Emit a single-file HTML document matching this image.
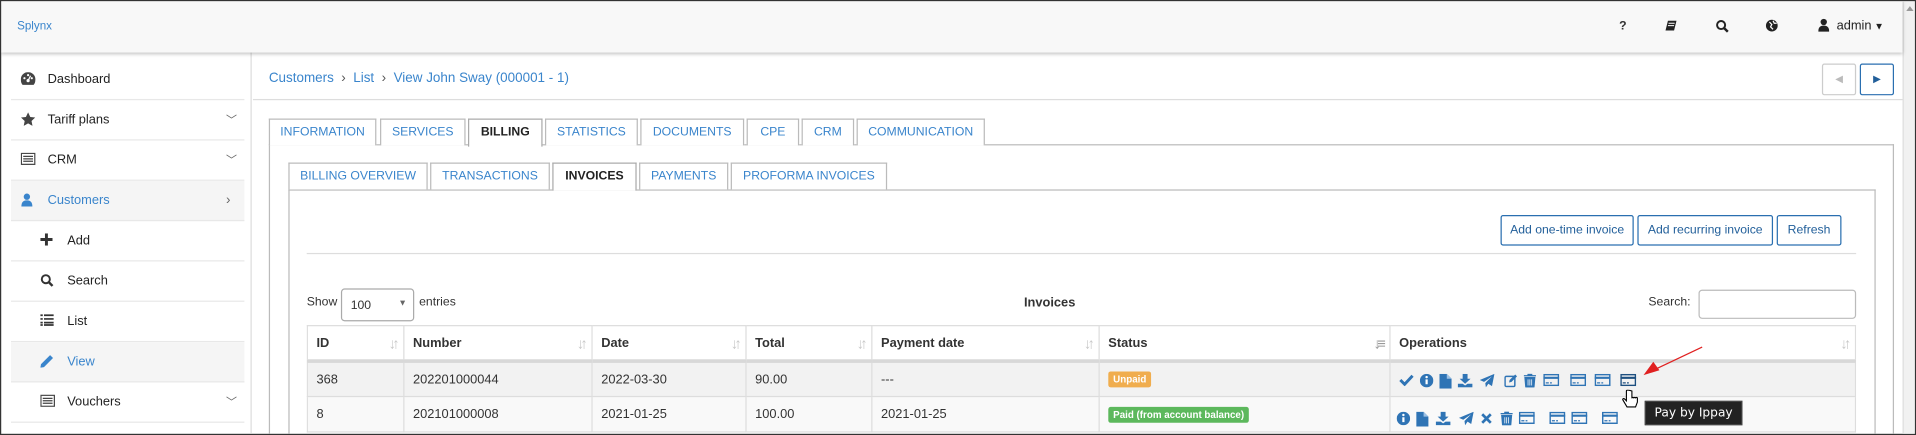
<!DOCTYPE html>
<html><head><meta charset="utf-8"><style>
*{box-sizing:border-box;margin:0;padding:0}
html,body{width:1916px;height:435px;overflow:hidden;background:#fff;font-family:"Liberation Sans",sans-serif}
#st{position:absolute;left:0;top:0;width:1568px;height:356px;transform:scale(1.22194);transform-origin:0 0;font-size:11px;color:#333;border:1px solid #333;overflow:hidden}
.a{position:absolute;white-space:nowrap}
.hdr{left:0;top:0;width:1556px;height:42px;background:#f8f8f8;box-shadow:0 1px 3px rgba(0,0,0,.25);z-index:2}
.sb{left:1556px;top:0;width:12px;height:355px;background:#f1f1f1;border-left:1px solid #ddd}
.side{left:0;top:42px;width:205px;height:313px;border-right:1px solid #ddd}
.it{position:absolute;left:8px;width:191px;height:33px;border-bottom:1px solid #e8e8e8;line-height:32px;font-size:10.5px;color:#222}
.it.on{background:#f5f5f5;color:#3a85cc}
.it .t{position:absolute;left:30px}
.it.sub .t{position:absolute;left:46px}
.it .ic{position:absolute;left:8px;top:10px}
.it.sub .ic{left:24px}
.chev{position:absolute;left:176px;top:0;color:#666;font-size:9px}
.blue{color:#3a85cc}
.tab{position:absolute;height:22px;border:1px solid #bbb;border-bottom:none;background:#fff;text-align:center;line-height:21px;font-size:10px;color:#3a85cc}
.tab.on{color:#222;font-weight:bold;height:23px;border-color:#aaa}
.btn{position:absolute;top:175px;height:25px;border:1px solid #2a6fb0;border-radius:2px;font-size:10px;line-height:23px;text-align:center;color:#225f9a}
th,td{border:1px solid #ddd;text-align:left;padding:0 7px;font-size:10.5px}
th{height:29px;font-weight:bold;border-bottom:3px solid #d8d8d8;position:relative}
td{height:29px}
.so{position:absolute;right:6px;top:7px;color:#c8c8c8;font-size:12px;font-weight:bold;letter-spacing:-3px}
.bdg{display:inline-block;color:#fff;font-size:8px;font-weight:bold;padding:2px 4px;border-radius:2px}
</style></head><body><div id="st">
<div class="a hdr">
 <div class="a blue" style="left:13px;top:15px;font-size:9.5px">Splynx</div>
 <div class="a" style="left:1324px;top:15px;font-size:10px;font-weight:bold">?</div>
 <svg class="a" style="left:1362px;top:15px" width="10" height="10" viewBox="0 0 10 10"><path d="M2 1h7l-2 8H0z" fill="#222"/><path d="M2.5 3h5M2 5h5" stroke="#fff" stroke-width=".8"/></svg>
 <svg class="a" style="left:1403px;top:15px" width="11" height="11" viewBox="0 0 11 11"><circle cx="4.5" cy="4.5" r="3.3" fill="none" stroke="#222" stroke-width="1.6"/><path d="M7 7l3 3" stroke="#222" stroke-width="2"/></svg>
 <svg class="a" style="left:1444px;top:15px" width="10" height="10" viewBox="0 0 10 10"><circle cx="5" cy="5" r="4.8" fill="#222"/><path d="M3 2l2 2-1 2 2 2M6 1l1 2 2 0" stroke="#fff" stroke-width="1" fill="none"/></svg>
 <svg class="a" style="left:1487px;top:14px" width="9" height="11" viewBox="0 0 9 11"><circle cx="4.5" cy="3" r="2.6" fill="#222"/><path d="M0 11c0-4 2-5 4.5-5S9 7 9 11z" fill="#222"/></svg>
 <div class="a" style="left:1502px;top:14px;font-size:10.5px;color:#222">admin<span style="font-size:8px"> ▼</span></div>
</div>
<div class="a sb"><div style="position:absolute;left:2px;top:4px;border:3px solid transparent;border-bottom:4px solid #999;border-top:0"></div></div>
<div class="a side">
 <div class="it" style="top:6px"><svg class="ic" width="12" height="11" viewBox="0 0 12 11"><path d="M6 0a6 6 0 0 0-6 6c0 2 .6 3.5 1.5 4.5h9C11.4 9.5 12 8 12 6A6 6 0 0 0 6 0z" fill="#444"/><circle cx="6" cy="7" r="1.3" fill="#fff"/><path d="M6 7l2-4" stroke="#fff"/><circle cx="3" cy="5" r=".9" fill="#fff"/><circle cx="9" cy="5" r=".9" fill="#fff"/><circle cx="6" cy="2.5" r=".9" fill="#fff"/></svg><span class="t">Dashboard</span></div>
 <div class="it" style="top:39px"><svg class="ic" width="12" height="11" viewBox="0 0 12 11"><path d="M6 0l1.8 3.7 4 .5-3 2.8.8 4L6 9 2.4 11l.8-4-3-2.8 4-.5z" fill="#444"/></svg><span class="t">Tariff plans</span><span class="chev">﹀</span></div>
 <div class="it" style="top:72px"><svg class="ic" width="12" height="10" viewBox="0 0 12 10"><rect x=".5" y=".5" width="11" height="9" fill="none" stroke="#444"/><path d="M2 3h8M2 5h8M2 7h8" stroke="#444"/></svg><span class="t">CRM</span><span class="chev">﹀</span></div>
 <div class="it on" style="top:105px"><svg class="ic" width="10" height="11" viewBox="0 0 9 11"><circle cx="4.5" cy="3" r="2.6" fill="#3a85cc"/><path d="M0 11c0-4 2-5 4.5-5S9 7 9 11z" fill="#3a85cc"/></svg><span class="t">Customers</span><span class="chev" style="font-size:11px">›</span></div>
 <div class="it sub" style="top:138px"><svg class="ic" width="10" height="10" viewBox="0 0 10 10"><path d="M5 0v10M0 5h10" stroke="#333" stroke-width="2.4"/></svg><span class="t">Add</span></div>
 <div class="it sub" style="top:171px"><svg class="ic" width="11" height="11" viewBox="0 0 11 11"><circle cx="4.5" cy="4.5" r="3.3" fill="none" stroke="#333" stroke-width="1.6"/><path d="M7 7l3 3" stroke="#333" stroke-width="2"/></svg><span class="t">Search</span></div>
 <div class="it sub" style="top:204px"><svg class="ic" width="11" height="10" viewBox="0 0 11 10"><path d="M0 1h2M0 4h2M0 7h2M3 1h8M3 4h8M3 7h8M0 9h2M3 9h8" stroke="#333" stroke-width="1.4"/></svg><span class="t">List</span></div>
 <div class="it sub on" style="top:237px"><svg class="ic" width="11" height="11" viewBox="0 0 11 11"><path d="M0 11l.6-3L8 .6l2.4 2.4L3 10.4z" fill="#3a85cc"/></svg><span class="t">View</span></div>
 <div class="it sub" style="top:270px"><svg class="ic" width="12" height="10" viewBox="0 0 12 10"><rect x=".5" y=".5" width="11" height="9" fill="none" stroke="#444"/><path d="M2 3h8M2 5h8M2 7h8" stroke="#444"/></svg><span class="t">Vouchers</span><span class="chev">﹀</span></div>
</div>
<div class="a blue" style="left:219px;top:57px;font-size:11px">Customers&nbsp; <span style="color:#555">›</span>&nbsp; List&nbsp; <span style="color:#555">›</span>&nbsp; View John Sway (000001 - 1)</div>
<div class="a" style="left:206px;top:80px;width:1350px;height:1px;background:#ddd"></div>
<div class="a" style="left:1490px;top:51px;width:28px;height:26px;border:1px solid #ccc;border-radius:2px;color:#bbb;text-align:center;line-height:24px;font-size:8px">◀</div>
<div class="a" style="left:1521px;top:51px;width:28px;height:26px;border:1px solid #2a6fb0;border-radius:2px;color:#225f9a;text-align:center;line-height:24px;font-size:8px">▶</div>
<div class="a" style="left:219px;top:117px;width:1330px;height:237px;border:1px solid #bbb;border-bottom:none"></div>
<div class="tab" style="left:219px;top:96px;width:88px">INFORMATION</div>
<div class="tab" style="left:310px;top:96px;width:70px">SERVICES</div>
<div class="tab on" style="left:382px;top:96px;width:61px">BILLING</div>
<div class="tab" style="left:445px;top:96px;width:76px">STATISTICS</div>
<div class="tab" style="left:523px;top:96px;width:85px">DOCUMENTS</div>
<div class="tab" style="left:610px;top:96px;width:43px">CPE</div>
<div class="tab" style="left:655px;top:96px;width:43px">CRM</div>
<div class="tab" style="left:700px;top:96px;width:105px">COMMUNICATION</div>
<div class="a" style="left:235px;top:154px;width:1299px;height:200px;border:1px solid #bbb;border-bottom:none"></div>
<div class="tab" style="left:235px;top:132px;width:114px">BILLING OVERVIEW</div>
<div class="tab" style="left:351px;top:132px;width:98px">TRANSACTIONS</div>
<div class="tab on" style="left:451px;top:132px;width:69px">INVOICES</div>
<div class="tab" style="left:522px;top:132px;width:73px">PAYMENTS</div>
<div class="tab" style="left:597px;top:132px;width:128px">PROFORMA INVOICES</div>
<div class="btn" style="left:1227px;width:109px">Add one-time invoice</div>
<div class="btn" style="left:1339px;width:111px">Add recurring invoice</div>
<div class="btn" style="left:1453px;width:53px">Refresh</div>
<div class="a" style="left:250px;top:206px;width:1268px;height:1px;background:#ddd"></div>
<div class="a" style="left:250px;top:241px;font-size:10px">Show</div>
<div class="a" style="left:278px;top:235px;width:60px;height:27px;border:1px solid #aaa;border-radius:3px;font-size:10px;padding:8px 0 0 7px">100<span style="position:absolute;right:5px;top:8px;font-size:7px;color:#666">▼</span></div>
<div class="a" style="left:342px;top:241px;font-size:10px">entries</div>
<div class="a" style="left:837px;top:241px;font-size:10.5px;font-weight:bold">Invoices</div>
<div class="a" style="left:1348px;top:241px;font-size:10px">Search:</div>
<div class="a" style="left:1389px;top:236px;width:129px;height:24px;border:1px solid #bbb;border-radius:3px"></div>
<div class="a" style="left:250px;top:265px;width:1268px;height:90px;overflow:hidden">
<table style="width:1268px;border-collapse:collapse;background:#fff">
<tr><th style="width:79px">ID<span class="so">↓↑</span></th><th style="width:154px">Number<span class="so">↓↑</span></th><th style="width:126px">Date<span class="so">↓↑</span></th><th style="width:103px">Total<span class="so">↓↑</span></th><th style="width:186px">Payment date<span class="so">↓↑</span></th><th style="width:238px">Status<span class="so" style="color:#999">↓≡</span></th><th>Operations<span class="so">↓↑</span></th></tr>
<tr style="background:#f2f2f2"><td>368</td><td>202201000044</td><td>2022-03-30</td><td>90.00</td><td>---</td><td><span class="bdg" style="background:#f0ad4e">Unpaid</span></td><td></td></tr>
<tr style="background:#f9f9f9"><td>8</td><td>202101000008</td><td>2021-01-25</td><td>100.00</td><td>2021-01-25</td><td><span class="bdg" style="background:#5cb85c">Paid (from account balance)</span></td><td></td></tr>
</table></div>
<div class="a" style="left:1144px;top:305px;height:12px">
<svg class="a" style="left:0" width="12" height="10" viewBox="0 0 12 10"><path d="M1 5l3.5 3.5L11 1.5" stroke="#2f74b5" stroke-width="2.4" fill="none"/></svg>
<svg class="a" style="left:17px" width="11" height="11" viewBox="0 0 11 11"><circle cx="5.5" cy="5.5" r="5.5" fill="#2f74b5"/><path d="M5.5 4.5v4" stroke="#fff" stroke-width="1.8"/><circle cx="5.5" cy="2.6" r="1" fill="#fff"/></svg>
<svg class="a" style="left:33px" width="10" height="12" viewBox="0 0 10 12"><path d="M0 0h6l4 4v8H0z" fill="#2f74b5"/><path d="M6 0v4h4" fill="#9cc0e4"/></svg>
<svg class="a" style="left:48px" width="12" height="11" viewBox="0 0 12 11"><path d="M4 0h4v4h2.5L6 8 1.5 4H4z" fill="#2f74b5"/><path d="M0 8h4l2 1.5L8 8h4v3H0z" fill="#2f74b5"/></svg>
<svg class="a" style="left:66px" width="12" height="11" viewBox="0 0 12 11"><path d="M12 0L0 5l3.5 1.5L10 2 4.5 7.5 5 11l2-3 3 2z" fill="#2f74b5"/></svg>
<svg class="a" style="left:86px" width="11" height="11" viewBox="0 0 11 11"><rect x=".7" y="2" width="8" height="8.3" fill="none" stroke="#2f74b5" stroke-width="1.2" rx="1"/><path d="M4 7l.4-2L9 .5l1.5 1.5L6 6.5z" fill="#2f74b5"/></svg>
<svg class="a" style="left:102px" width="10" height="11" viewBox="0 0 10 11"><path d="M0 1.5h10M3.5 1.5V0h3v1.5M1 3h8l-.7 8H1.7z" stroke="#2f74b5" fill="#2f74b5" stroke-width="1"/><path d="M3.5 4.5v5M5 4.5v5M6.5 4.5v5" stroke="#fff" stroke-width=".6"/></svg>
<svg class="a" style="left:118px" width="13" height="10" viewBox="0 0 13 10"><rect x=".6" y=".6" width="11.8" height="8.8" fill="none" stroke="#2f74b5" stroke-width="1.2"/><path d="M0 3.2h13" stroke="#2f74b5" stroke-width="1.8"/><path d="M2 7.3h2.5M5.5 7.3h1.5" stroke="#2f74b5"/></svg>
<svg class="a" style="left:140px" width="13" height="10" viewBox="0 0 13 10"><rect x=".6" y=".6" width="11.8" height="8.8" fill="none" stroke="#2f74b5" stroke-width="1.2"/><path d="M0 3.2h13" stroke="#2f74b5" stroke-width="1.8"/><path d="M2 7.3h2.5M5.5 7.3h1.5" stroke="#2f74b5"/></svg>
<svg class="a" style="left:160px" width="13" height="10" viewBox="0 0 13 10"><rect x=".6" y=".6" width="11.8" height="8.8" fill="none" stroke="#2f74b5" stroke-width="1.2"/><path d="M0 3.2h13" stroke="#2f74b5" stroke-width="1.8"/><path d="M2 7.3h2.5M5.5 7.3h1.5" stroke="#2f74b5"/></svg>
<svg class="a" style="left:181px" width="13" height="10" viewBox="0 0 13 10"><rect x=".6" y=".6" width="11.8" height="8.8" fill="none" stroke="#1d4f80" stroke-width="1.2"/><path d="M0 3.2h13" stroke="#1d4f80" stroke-width="1.8"/><path d="M2 7.3h2.5M5.5 7.3h1.5" stroke="#1d4f80"/></svg>
</div>
<div class="a" style="left:1142px;top:336px;height:12px">
<svg class="a" style="left:0" width="11" height="11" viewBox="0 0 11 11"><circle cx="5.5" cy="5.5" r="5.5" fill="#2f74b5"/><path d="M5.5 4.5v4" stroke="#fff" stroke-width="1.8"/><circle cx="5.5" cy="2.6" r="1" fill="#fff"/></svg>
<svg class="a" style="left:16px" width="10" height="12" viewBox="0 0 10 12"><path d="M0 0h6l4 4v8H0z" fill="#2f74b5"/><path d="M6 0v4h4" fill="#9cc0e4"/></svg>
<svg class="a" style="left:32px" width="12" height="11" viewBox="0 0 12 11"><path d="M4 0h4v4h2.5L6 8 1.5 4H4z" fill="#2f74b5"/><path d="M0 8h4l2 1.5L8 8h4v3H0z" fill="#2f74b5"/></svg>
<svg class="a" style="left:51px" width="12" height="11" viewBox="0 0 12 11"><path d="M12 0L0 5l3.5 1.5L10 2 4.5 7.5 5 11l2-3 3 2z" fill="#2f74b5"/></svg>
<svg class="a" style="left:69px;top:1px" width="9" height="9" viewBox="0 0 9 9"><path d="M1 1l7 7M8 1L1 8" stroke="#2f74b5" stroke-width="2.2"/></svg>
<svg class="a" style="left:85px" width="10" height="11" viewBox="0 0 10 11"><path d="M0 1.5h10M3.5 1.5V0h3v1.5M1 3h8l-.7 8H1.7z" stroke="#2f74b5" fill="#2f74b5" stroke-width="1"/><path d="M3.5 4.5v5M5 4.5v5M6.5 4.5v5" stroke="#fff" stroke-width=".6"/></svg>
<svg class="a" style="left:100px" width="13" height="10" viewBox="0 0 13 10"><rect x=".6" y=".6" width="11.8" height="8.8" fill="none" stroke="#2f74b5" stroke-width="1.2"/><path d="M0 3.2h13" stroke="#2f74b5" stroke-width="1.8"/><path d="M2 7.3h2.5M5.5 7.3h1.5" stroke="#2f74b5"/></svg>
<svg class="a" style="left:125px" width="13" height="10" viewBox="0 0 13 10"><rect x=".6" y=".6" width="11.8" height="8.8" fill="none" stroke="#2f74b5" stroke-width="1.2"/><path d="M0 3.2h13" stroke="#2f74b5" stroke-width="1.8"/><path d="M2 7.3h2.5M5.5 7.3h1.5" stroke="#2f74b5"/></svg>
<svg class="a" style="left:143px" width="13" height="10" viewBox="0 0 13 10"><rect x=".6" y=".6" width="11.8" height="8.8" fill="none" stroke="#2f74b5" stroke-width="1.2"/><path d="M0 3.2h13" stroke="#2f74b5" stroke-width="1.8"/><path d="M2 7.3h2.5M5.5 7.3h1.5" stroke="#2f74b5"/></svg>
<svg class="a" style="left:168px" width="13" height="10" viewBox="0 0 13 10"><rect x=".6" y=".6" width="11.8" height="8.8" fill="none" stroke="#2f74b5" stroke-width="1.2"/><path d="M0 3.2h13" stroke="#2f74b5" stroke-width="1.8"/><path d="M2 7.3h2.5M5.5 7.3h1.5" stroke="#2f74b5"/></svg>
</div>
<svg class="a" style="left:1340px;top:280px" width="55" height="30" viewBox="0 0 55 30"><path d="M52 3L14 21" stroke="#e02020" stroke-width="1"/><path d="M4 26l8-11 5 7z" fill="#e02020"/></svg>
<svg class="a" style="left:1326px;top:318px" width="14" height="15" viewBox="0 0 14 15"><path d="M4 1v8L2.5 7.5C1.5 6.8.5 7.5 1.3 8.6L4.5 14h7l1.5-4V7c0-1-1.5-1-1.5 0 0-1-1.5-1-1.5 0 0-1-1.5-1-1.5 0V1C5.5 0 4 0 4 1z" fill="#fff" stroke="#000" stroke-width=".9"/></svg>
<div class="a" style="left:1345px;top:327px;width:80px;height:20px;background:#222;color:#fff;font-family:'DejaVu Sans',sans-serif;font-size:10px;line-height:20px;text-align:center;border:1px solid #444">Pay by Ippay</div>
</div></body></html>
